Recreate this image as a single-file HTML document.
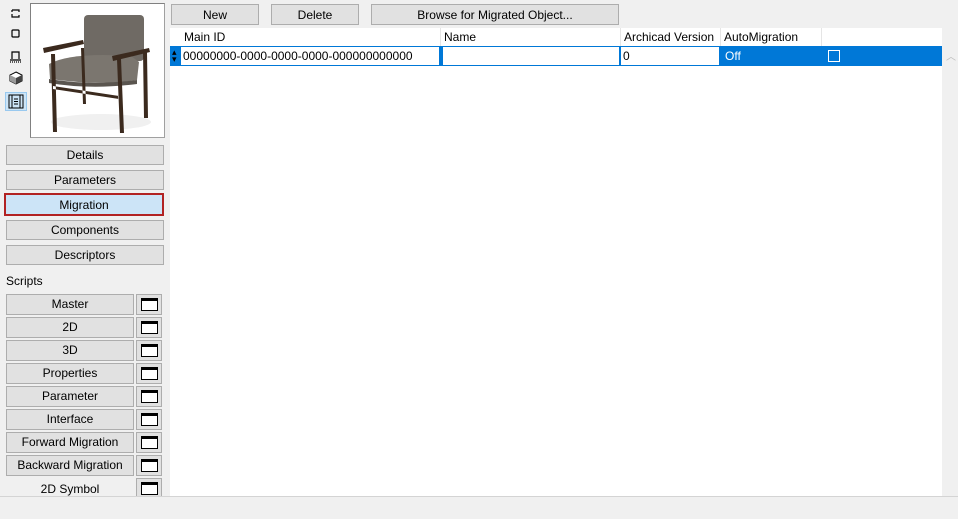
<!DOCTYPE html>
<html><head><meta charset="utf-8"><style>
*{box-sizing:border-box;margin:0;padding:0}
body{width:958px;height:519px;background:#f0f0f0;font-family:"Liberation Sans",sans-serif;font-size:12px;color:#000;position:relative;overflow:hidden}
.a{position:absolute}
.btn{position:absolute;background:#e1e1e1;border:1px solid #adadad;text-align:center;line-height:19px;font-size:12px}
.ib{position:absolute;left:136px;width:26px;height:21px;background:#e1e1e1;border:1px solid #adadad}
.ib i{position:absolute;left:4px;top:3px;width:17px;height:13px;border:1px solid #000;border-top-width:3px;background:#fff}
.hd{position:absolute;top:28px;height:18px;line-height:19px;background:#fff;padding-left:3px;border-right:1px solid #e5e5e5}
</style></head><body>
<svg class="a" style="left:0;top:0" width="30" height="115">
<g fill="none" stroke="#000" stroke-width="1.2">
<path d="M12 10h7v2M19 15v2h-7v-3M12 10v2"/>
<rect x="12" y="30" width="7" height="7" rx="1"/>
<path d="M12 59v-7h7v7M10 60h11"/><path d="M10 62h11" stroke-dasharray="1 1"/>
</g>
<path d="M16 72l6 3v6l-6 3-6-3v-6z" fill="#fff" stroke="#000"/>
<path d="M16 78l6-3v6l-6 3z" fill="#444"/><path d="M16 78l-6-3v6l6 3z" fill="#999"/>
<rect x="5.5" y="92.5" width="21" height="18" fill="#cce4f7" stroke="#99c9ef"/>
<rect x="9" y="95" width="14" height="13" fill="none" stroke="#000"/>
<path d="M12 95v13M20 95v13M14 99h4M14 101.5h4M14 104h4" stroke="#000"/>
</svg>
<div class="a" style="left:30px;top:3px;width:135px;height:135px;background:#fff;border:1px solid #a0a0a0;border-top-color:#808080;border-left-color:#808080">
<svg width="133" height="133">
<ellipse cx="70" cy="118" rx="50" ry="8" fill="#f0f0f0"/>
<rect x="53" y="11" width="60" height="46" rx="4" fill="#6f6a64"/>
<path d="M18 60 Q40 48 100 52 L108 58 L106 76 Q70 82 19 75 Z" fill="#7b766f"/>
<path d="M18 75 Q60 82 106 76 L106 80 Q60 86 18 79Z" fill="#5a554f"/>
<path d="M20 50l2 78h4l-2-78z M50 44l2 56h3l-2-56z M86 55l3 74h4l-3-74z M112 48l1 66h4l-1-66z M22 82l66 10v3l-66-10z" fill="#3b2a1e"/>
<path d="M12 44l40-8 1 4-40 9z M81 52l37-8 1 4-37 9z" fill="#3b2a1e"/>
</svg></div>
<div class="btn" style="left:6px;top:145px;width:158px;height:20px">Details</div>
<div class="btn" style="left:6px;top:170px;width:158px;height:20px">Parameters</div>
<div class="btn" style="left:4px;top:193px;width:160px;height:23px;background:#cce4f7;border:2px solid #b22222;line-height:21px">Migration</div>
<div class="btn" style="left:6px;top:220px;width:158px;height:20px">Components</div>
<div class="btn" style="left:6px;top:245px;width:158px;height:20px">Descriptors</div>
<div class="a" style="left:6px;top:274px">Scripts</div>
<div class="btn" style="left:6px;top:294px;width:128px;height:21px">Master</div><div class="ib" style="top:294px"><i></i></div>
<div class="btn" style="left:6px;top:317px;width:128px;height:21px">2D</div><div class="ib" style="top:317px"><i></i></div>
<div class="btn" style="left:6px;top:340px;width:128px;height:21px">3D</div><div class="ib" style="top:340px"><i></i></div>
<div class="btn" style="left:6px;top:363px;width:128px;height:21px">Properties</div><div class="ib" style="top:363px"><i></i></div>
<div class="btn" style="left:6px;top:386px;width:128px;height:21px">Parameter</div><div class="ib" style="top:386px"><i></i></div>
<div class="btn" style="left:6px;top:409px;width:128px;height:21px">Interface</div><div class="ib" style="top:409px"><i></i></div>
<div class="btn" style="left:6px;top:432px;width:128px;height:21px">Forward Migration</div><div class="ib" style="top:432px"><i></i></div>
<div class="btn" style="left:6px;top:455px;width:128px;height:21px">Backward Migration</div><div class="ib" style="top:455px"><i></i></div>
<div class="a" style="left:6px;top:482px;width:128px;text-align:center">2D Symbol</div><div class="ib" style="top:478px;height:19px;border-bottom:none"><i></i></div>
<div class="a" style="left:170px;top:28px;width:772px;height:468px;background:#fff"></div>
<div class="btn" style="left:171px;top:4px;width:88px;height:21px;line-height:21px">New</div>
<div class="btn" style="left:271px;top:4px;width:88px;height:21px;line-height:21px">Delete</div>
<div class="btn" style="left:371px;top:4px;width:248px;height:21px;line-height:21px">Browse for Migrated Object...</div>
<div class="hd" style="left:181px;width:260px">Main ID</div>
<div class="hd" style="left:441px;width:180px">Name</div>
<div class="hd" style="left:621px;width:100px">Archicad Version</div>
<div class="hd" style="left:721px;width:101px">AutoMigration</div>
<div class="a" style="left:170px;top:46px;width:772px;height:20px;background:#0078d7"></div>
<div class="a" style="left:172px;top:49px;color:#000;font-size:9px;line-height:7px">▴<br>▾</div>
<div class="a" style="left:181px;top:47px;width:258px;height:18px;background:#fff;line-height:19px;padding-left:2px">00000000-0000-0000-0000-000000000000</div>
<div class="a" style="left:443px;top:47px;width:176px;height:18px;background:#fff"></div>
<div class="a" style="left:621px;top:47px;width:98px;height:18px;background:#fff;line-height:19px;padding-left:2px">0</div>
<div class="a" style="left:725px;top:47px;height:18px;line-height:19px;color:#fff">Off</div>
<div class="a" style="left:828px;top:50px;width:12px;height:12px;border:1px solid #fff"></div>
<div class="a" style="left:946px;top:48px;color:#bbb;font-size:10px">︿</div>
<div class="a" style="left:0;top:496px;width:958px;height:1px;background:#d4d4d4"></div>
</body></html>
